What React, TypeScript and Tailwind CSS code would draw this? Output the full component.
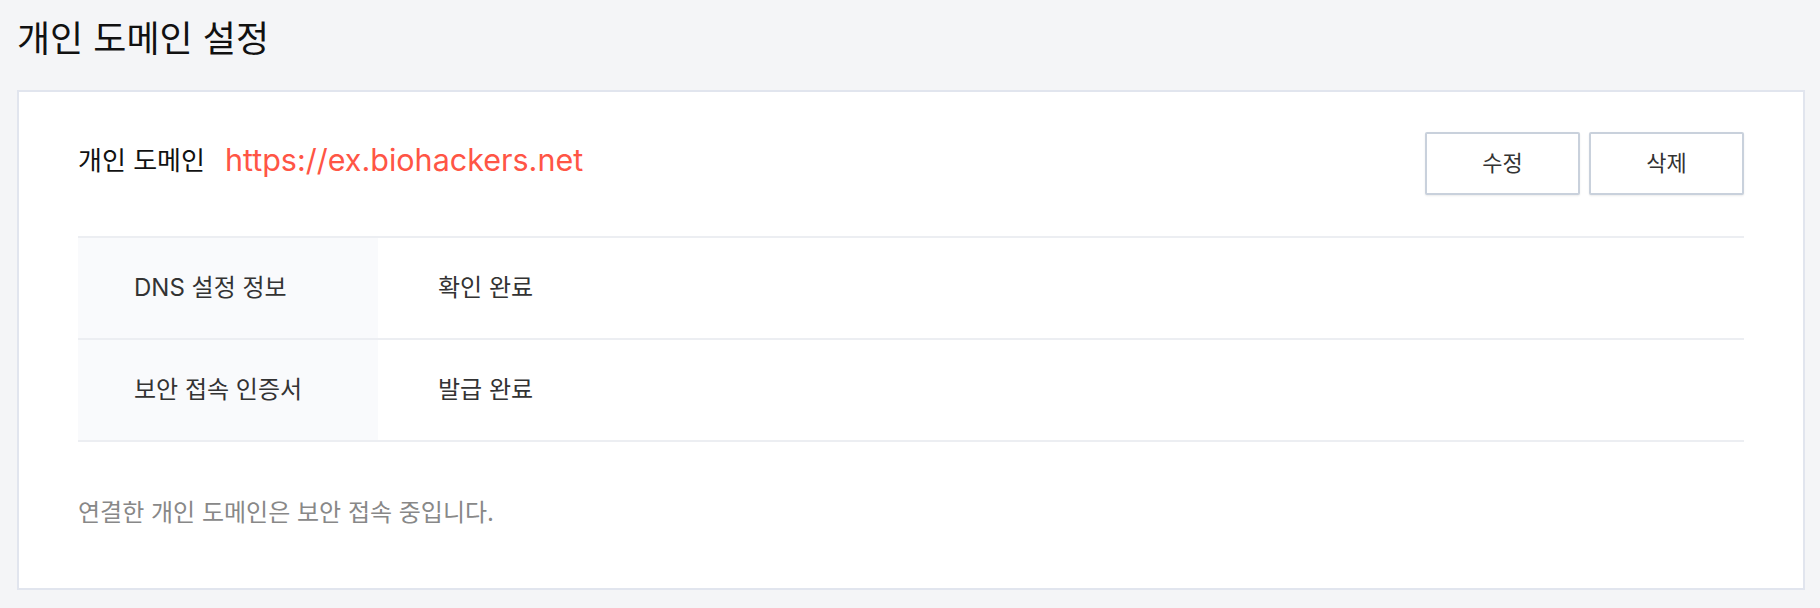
import React from "react";

const FONT = 'Inter, "Noto Sans CJK KR", sans-serif';

function Row({ label, value }: { label: string; value: string }) {
  return (
    <div className="flex h-[102px] border-b-2 border-[#eceef2]">
      <div className="w-[300px] bg-[#f9fafc] flex items-center pl-[56px] text-[24px] text-[#333]">
        {label}
      </div>
      <div className="flex items-center pl-[60px] text-[24px] text-[#333]">{value}</div>
    </div>
  );
}

export default function App() {
  return (
    <div className="min-h-[608px] bg-[#f4f5f7] pl-[17px] pr-[15px] pt-[12px] pb-[18px]" style={{ fontFamily: FONT }}>
      <h1 className="text-[36px] leading-[54px] text-[#111] mb-[24px] font-normal">개인 도메인 설정</h1>
      <div className="bg-white border-2 border-[#e1e5ee] px-[59px] pt-[40px] pb-[59px]">
        <div className="flex items-center justify-between h-[63px]">
          <div className="flex items-center mb-[7px]">
            <span className="text-[26px] text-[#111]">개인 도메인</span>
            <span className="ml-[20px] text-[30.5px] text-[#ff5545]">https://ex.biohackers.net</span>
          </div>
          <div className="flex gap-[9px]">
            <button className="w-[155px] h-[63px] border-2 border-[#c9d1dc] rounded-[2px] bg-white shadow-[0_1px_2px_rgba(0,0,0,0.08)] text-[22px] text-[#333]">
              수정
            </button>
            <button className="w-[155px] h-[63px] border-2 border-[#c9d1dc] rounded-[2px] bg-white shadow-[0_1px_2px_rgba(0,0,0,0.08)] text-[22px] text-[#333]">
              삭제
            </button>
          </div>
        </div>
        <div className="mt-[41px] border-t-2 border-[#eceef2]">
          <Row label="DNS 설정 정보" value="확인 완료" />
          <Row label="보안 접속 인증서" value="발급 완료" />
        </div>
        <p className="mt-[55px] text-[24px] leading-[32px] text-[#888]">연결한 개인 도메인은 보안 접속 중입니다.</p>
      </div>
    </div>
  );
}
